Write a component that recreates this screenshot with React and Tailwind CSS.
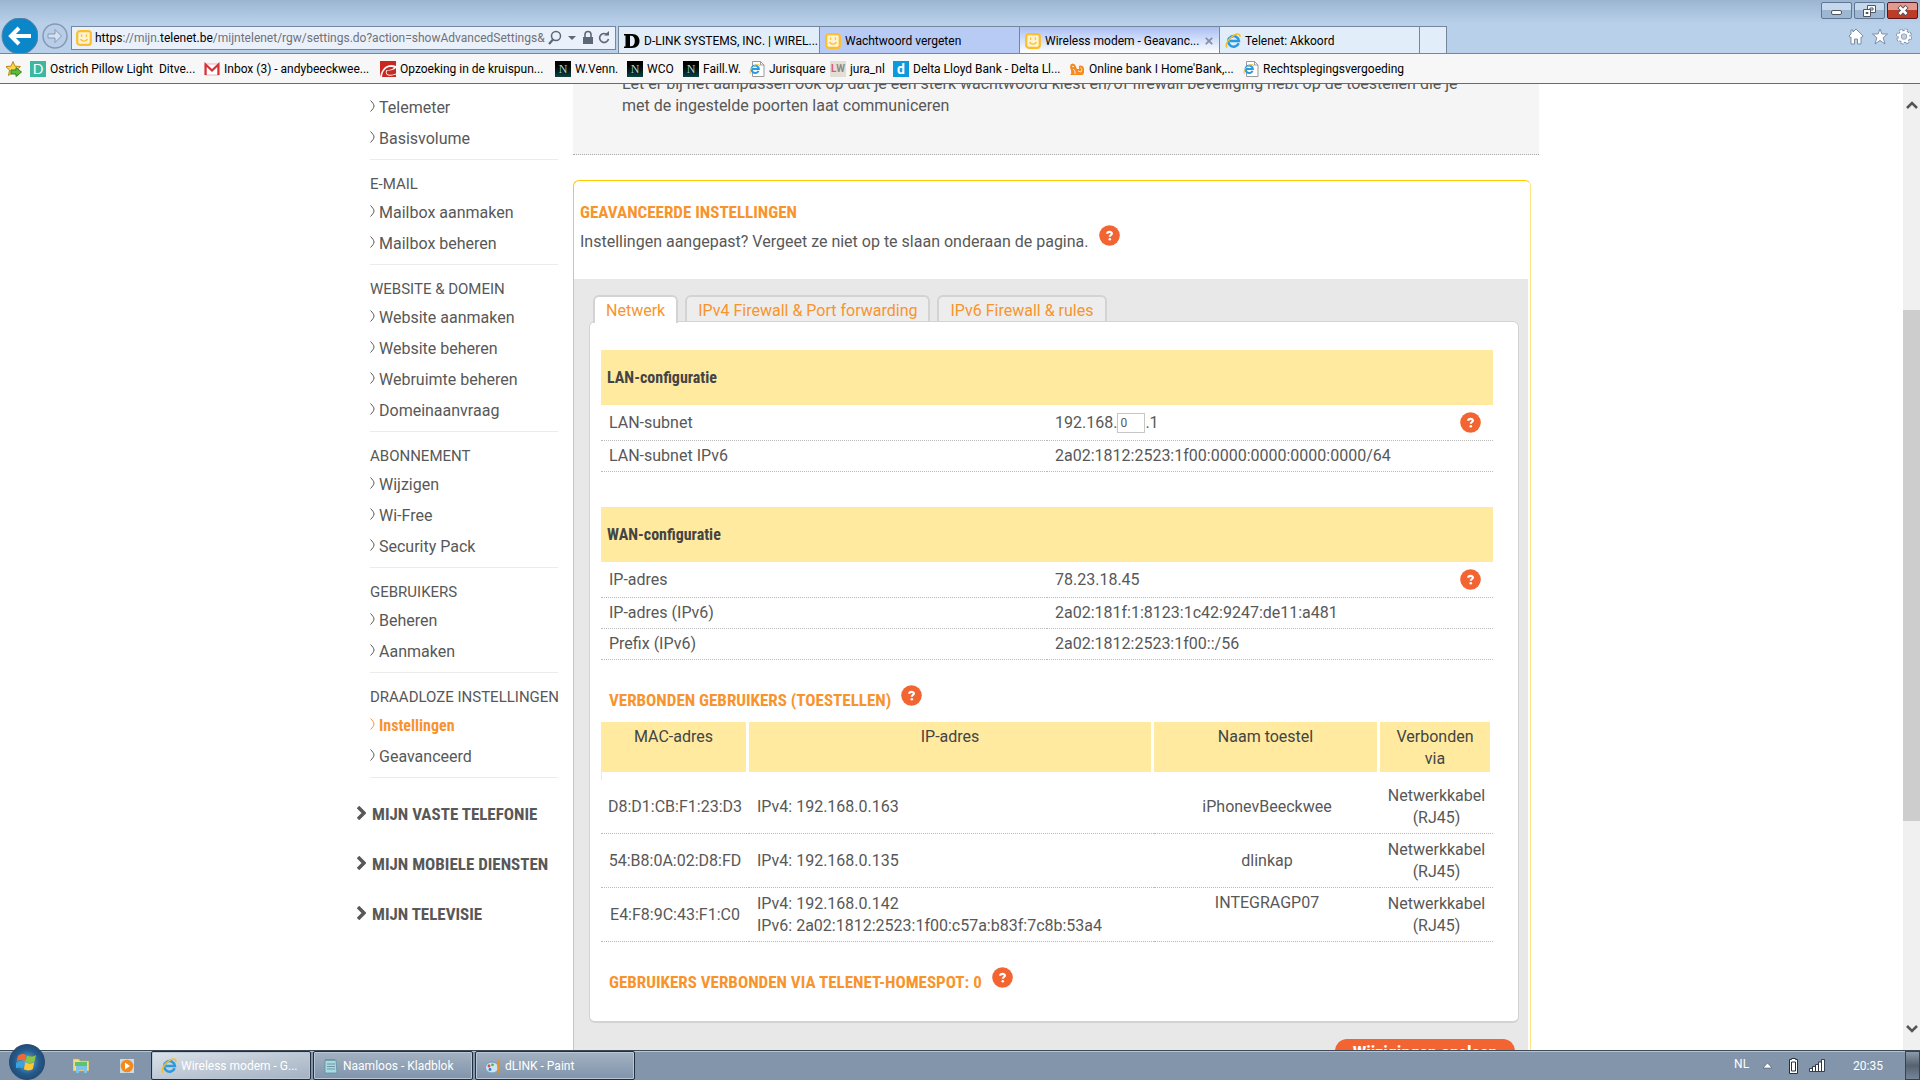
import React, { useState } from 'react'

const favorites = [
    { icon: 'ditve', name: 'Ostrich Pillow Light  Ditve...', width: 'w-[165px]' },
    { icon: 'gmail', name: 'Inbox (3) - andybeeckwee...', width: 'w-[167px]' },
    { icon: 'kruis', name: 'Opzoeking in de kruispun...', width: 'w-[166px]' },
    { icon: 'n', name: 'W.Venn.', width: 'w-[63px]' },
    { icon: 'n', name: 'WCO', width: 'w-[47px]' },
    { icon: 'n', name: 'Faill.W.', width: 'w-[57px]' },
    { icon: 'iepage', name: 'Jurisquare', width: 'w-[72px]' },
    { icon: 'lw', name: 'jura_nl', width: 'w-[54px]' },
    { icon: 'delta', name: 'Delta Lloyd Bank - Delta Ll...', width: 'w-[167px]' },
    { icon: 'lion', name: "Online bank I Home'Bank,...", width: 'w-[165px]' },
    { icon: 'iepage', name: 'Rechtsplegingsvergoeding', width: 'w-[170px]' },
]

const tabs = [
    { icon: 'dlink', name: 'D-LINK SYSTEMS, INC. | WIREL...', color: 'bg-[#e1eefa]', width: 'w-[201px]' },
    { icon: 'telenet', name: 'Wachtwoord vergeten', color: 'bg-[#b8cbf5]', width: 'w-[200px]' },
    { icon: 'telenet', name: 'Wireless modem - Geavanc...', color: 'bg-linear-to-b from-[#a9bff3] to-white', width: 'w-[200px]', active: true },
    { icon: 'ie', name: 'Telenet: Akkoord', color: 'bg-[#e1eefa]', width: 'w-[200px]' },
]

const menu = [
    { title: '', items: ['Telemeter', 'Basisvolume'] },
    { title: 'E-MAIL', items: ['Mailbox aanmaken', 'Mailbox beheren'] },
    { title: 'WEBSITE & DOMEIN', items: ['Website aanmaken', 'Website beheren', 'Webruimte beheren', 'Domeinaanvraag'] },
    { title: 'ABONNEMENT', items: ['Wijzigen', 'Wi-Free', 'Security Pack'] },
    { title: 'GEBRUIKERS', items: ['Beheren', 'Aanmaken'] },
    { title: 'DRAADLOZE INSTELLINGEN', items: ['Instellingen', 'Geavanceerd'] },
]

const mainMenu = ['MIJN VASTE TELEFONIE', 'MIJN MOBIELE DIENSTEN', 'MIJN TELEVISIE']

const settingTabs = ['Netwerk', 'IPv4 Firewall & Port forwarding', 'IPv6 Firewall & rules']

const devices = [
    { mac: 'D8:D1:CB:F1:23:D3', ips: ['IPv4: 192.168.0.163'], name: 'iPhonevBeeckwee' },
    { mac: '54:B8:0A:02:D8:FD', ips: ['IPv4: 192.168.0.135'], name: 'dlinkap' },
    { mac: 'E4:F8:9C:43:F1:C0', ips: ['IPv4: 192.168.0.142', 'IPv6: 2a02:1812:2523:1f00:c57a:b83f:7c8b:53a4'], name: 'INTEGRAGP07' },
]

const narrow = "font-['Liberation_Sans_Narrow','Roboto_Condensed',Roboto,sans-serif] font-bold"

function IeLogo({ className = 'size-4' }) {
    return (
        <svg viewBox="0 0 16 16" className={className}>
            <path d="M13.6 10.2A5.3 5.3 0 1 1 13.9 8H5" fill="none" stroke="#2a9be0" strokeWidth="2.6" />
            <path d="M2.2 14.6C-.6 12.4 3.6 5.2 8.8 2.3 12.6.2 15.6.8 14.8 4" fill="none" stroke="#f5bd27" strokeWidth="1.5" />
        </svg>
    )
}

function SiteIcon({ name }) {
    switch (name) {
        case 'telenet':
            return (
                <svg viewBox="0 0 16 16" className="size-4 shrink-0">
                    <rect x="1.2" y="1.2" width="13.6" height="13.6" rx="2.5" fill="#fdf3d4" stroke="#fcbf2b" strokeWidth="2.2" />
                    <path d="M5.6 4.6v2.2M10.4 4.6v2.2M4.6 9.2c1.4 2.6 5.4 2.6 6.8 0" fill="none" stroke="#fcbf2b" strokeWidth="1.4" />
                </svg>
            )
        case 'dlink':
            return (
                <svg viewBox="0 0 16 16" className="size-4 shrink-0">
                    <path fillRule="evenodd" d="M0 1h8c5 0 7.500 3 7.500 7s-2.500 7-7.500 7H0v-1.500h1.500v-11H0zM6 2.800v10.400c3.300.4 4.800-1.700 4.800-5.200S9.300 2.400 6 2.800z" />
                </svg>
            )
        case 'ie':
            return <IeLogo className="size-4 shrink-0" />
        case 'iepage':
            return (
                <svg viewBox="0 0 16 16" className="size-4 shrink-0">
                    <path d="M3.500.5h8l3.500 3.500v11.500H3.500z" fill="#fff" stroke="#9a9a9a" />
                    <path d="M11.500.5V4H15" fill="none" stroke="#9a9a9a" />
                    <path d="M9.600 9.800A3.700 3.700 0 1 1 9.900 8H3.500" fill="none" stroke="#2a9be0" strokeWidth="2" />
                    <path d="M1.500 12.800C-.3 10.500 3 6 6.500 4.200 9 3 10.800 3.300 10.400 5.200" fill="none" stroke="#f5bd27" />
                </svg>
            )
        case 'ditve':
            return <span className="flex size-4 shrink-0 items-center justify-center bg-[#3cb8a0] font-['Lato',sans-serif] text-sm text-white">D</span>
        case 'gmail':
            return (
                <svg viewBox="0 0 16 16" className="size-4 shrink-0">
                    <path d="M1 3h14v11H1z" fill="#fff" stroke="#e3a5a5" strokeWidth=".8" />
                    <path d="M1.600 14V3.500L8 9.500l6.400-6V14" fill="none" stroke="#d6323a" strokeWidth="2.200" />
                </svg>
            )
        case 'kruis':
            return (
                <svg viewBox="0 0 16 16" className="size-4 shrink-0">
                    <path d="M0 0h16v16H0z" fill="#c8281f" />
                    <path d="M0 16c1-5 3-9 7-11 3-1.500 6-1 9 0v2c-2 2-5 2.500-8.500 2.500C6 11 6.500 13 8.500 13.500c2.500.6 5 0 7.500-1v3.500z" fill="#f7f7f7" />
                    <path d="M2 16c.5-5 3-8.500 6-9.500 2.500-.8 5-.6 6 .2-1.500 1.800-4.500 2.300-7.500 2.300-1.500 2.500-.5 5 2 5.500 2.500.5 4.500 0 7.500-1V16z" fill="#c8281f" />
                </svg>
            )
        case 'n':
            return <span className="flex size-4 shrink-0 items-center justify-center bg-linear-to-b from-black to-[#0a4444] font-['Liberation_Serif',serif] text-xs text-[#a9d3d8]">N</span>
        case 'lw':
            return <span className="flex size-4 shrink-0 items-center justify-center bg-[#e2dfd6] font-['Roboto',sans-serif] text-[10px] font-bold"><span className="text-[#dd5a70]">L</span><span className="text-[#8d8a84]">W</span></span>
        case 'delta':
            return <span className="flex size-4 shrink-0 items-center justify-center bg-[#0a9bdc] font-['Roboto',sans-serif] text-sm font-bold text-white">d</span>
        default:
            return (
                <svg viewBox="0 0 16 16" className="size-4 shrink-0">
                    <path d="M1 14c2-1 1-3 1-5L1 7l.5-3.500 2-1 2.500 1L8 8h2V5c2-1 4.500 0 5 2.500V12l-1.500 2z" fill="#f58a1e" />
                    <path d="M4 8l2 2v3M9 10l3 1M11.500 6.500c1.500 1 1.500 3 .5 4.500M3 5.500h2" stroke="#fff" strokeWidth=".8" fill="none" />
                </svg>
            )
    }
}

function HelpButton() {
    return (
        <button type="button" aria-label="Help" className="block size-[21px] shrink-0 cursor-pointer">
            <svg viewBox="0 0 21 21" className="size-full">
                <circle cx="10.500" cy="10.500" r="10.300" fill="#f26532" />
                <path d="M8.200 8.700c.1-2.500 4.900-2.400 4.700-.1-.1 1.400-2.100 1.500-2.100 3.200" fill="none" stroke="#fff" strokeWidth="2.200" />
                <circle cx="10.800" cy="14.200" r="1.300" fill="#fff" />
            </svg>
        </button>
    )
}

function BrowserBar() {
    return (
        <header className="relative h-[84px] shrink-0 border-b border-[#6b6b6b] bg-[#f7f7f7] font-['Roboto',sans-serif] text-xs text-black">
            <div className="flex h-[54px] items-end border-b border-[#76879c] bg-linear-to-b from-[#9bb5d0] to-[#b9d0ea] to-45%">
                <div className="flex w-[71px] shrink-0 items-center gap-1 self-end">
                    <button aria-label="Back">
                        <svg viewBox="0 0 38 35" className="h-[35px] w-[38px]">
                            <circle cx="20" cy="18" r="18" fill="#0b86c8" stroke="#5f7f9f" />
                            <path d="M31 18H12M19 10l-8 8 8 8" fill="none" stroke="#fff" strokeWidth="4" />
                        </svg>
                    </button>
                    <button aria-label="Forward">
                        <svg viewBox="0 0 26 26" className="size-[26px]">
                            <circle cx="13" cy="13" r="12" fill="#b7cde8" stroke="#8798b2" strokeWidth="1.500" />
                            <path d="M6 11h7V6.500l6.500 6.500-6.500 6.500V15H6z" fill="#d3e1f3" stroke="#8798b2" />
                        </svg>
                    </button>
                </div>
                <div className="mb-[3px] flex h-6 w-[545px] shrink-0 items-center border border-[#7587a0] bg-[#eaf1fb] px-1">
                    <SiteIcon name="telenet" />
                    <div className="ml-[3px] flex-1 whitespace-nowrap text-[#6f7277]">
                        <span className="text-black">https</span>://mijn.<span className="text-black">telenet.be</span>/mijntelenet/rgw/settings.do?action=showAdvancedSettings&
                    </div>
                    <svg viewBox="0 0 64 16" className="h-4 w-16 shrink-0 text-[#5d6876]">
                        <circle cx="9" cy="6" r="4.500" fill="none" stroke="currentColor" strokeWidth="1.500" />
                        <path d="M6 9.500L2 14" stroke="currentColor" strokeWidth="2.200" />
                        <path d="M21 6h8l-4 4z" fill="currentColor" />
                        <path d="M36 7h10v7H36z" fill="currentColor" />
                        <path d="M38 7V4.500a3 3 0 0 1 6 0V7" fill="none" stroke="currentColor" strokeWidth="1.600" />
                        <path d="M60.500 5a4.500 4.500 0 1 0 1 4" fill="none" stroke="currentColor" strokeWidth="1.600" />
                        <path d="M57 5.500h5V1z" fill="currentColor" />
                    </svg>
                </div>
                <div className="ml-[2px] flex h-[27px] border-t border-[#76879c]">
                    {tabs.map((tab, index) => (
                        <button key={index} className={`flex items-center gap-1 overflow-hidden border-l border-[#76879c] pt-px pl-[5px] whitespace-nowrap ${tab.color} ${tab.width}`}>
                            <SiteIcon name={tab.icon} />
                            <span>{tab.name}</span>
                            {tab.active && (
                                <svg viewBox="0 0 8 8" className="mr-1.5 ml-auto size-2 shrink-0">
                                    <path d="M.8.8l6.400 6.400M7.200.8L.8 7.200" stroke="#8491a5" strokeWidth="1.800" />
                                </svg>
                            )}
                        </button>
                    ))}
                    <button aria-label="New tab" className="w-7 border-x border-[#76879c] bg-[#e1eefa]" />
                </div>
                <div className="mr-2 mb-2 ml-auto flex gap-2">
                    <button aria-label="Home">
                        <svg viewBox="0 0 16 17" className="h-[17px] w-4"><path d="M8 1l7 7-1 1.500-1-.5v7H9.500v-5h-3v5H3V9l-1 .5L1 8l2-2V2h2v2z" fill="#fff" stroke="#7c8da6" /></svg>
                    </button>
                    <button aria-label="Favorites">
                        <svg viewBox="0 0 16 17" className="h-[17px] w-4"><path d="M8 1l2 5h5.500l-4.300 3.700L13 16l-5-3.600L3 16l1.800-6.300L.5 6H6z" fill="#fff" stroke="#7c8da6" /></svg>
                    </button>
                    <button aria-label="Tools">
                        <svg viewBox="0 0 16 17" className="h-[17px] w-4">
                            <circle cx="8" cy="8.500" r="6" fill="none" stroke="#7c8da6" strokeWidth="4" strokeDasharray="2.700 2" />
                            <circle cx="8" cy="8.500" r="4.500" fill="none" stroke="#7c8da6" strokeWidth="4" />
                            <circle cx="8" cy="8.500" r="5.800" fill="none" stroke="#fff" strokeWidth="2.800" strokeDasharray="2.200 2.350" />
                            <circle cx="8" cy="8.500" r="4.300" fill="none" stroke="#fff" strokeWidth="2.400" />
                        </svg>
                    </button>
                </div>
            </div>
            <nav className="flex h-[29px] items-center gap-[9px] pl-[6px]">
                <button aria-label="Add to favorites" className="-mr-px">
                    <svg viewBox="0 0 16 16" className="size-4">
                        <path d="M7 .5l2 4.700 5.500.3-4 3.500 1.500 5.500-5-3-4.500 3L3.500 9-.3 5.500l5.300-.3z" fill="#fbd64b" stroke="#b98a1c" />
                        <path d="M5 9h5V6.500l5.500 4.500-5.500 4.500V13H5z" fill="#5dbb3c" stroke="#2f8420" />
                    </svg>
                </button>
                {favorites.map((item, index) => (
                    <a href="#" key={index} className={`flex shrink-0 items-center gap-1 whitespace-pre ${item.width}`}>
                        <SiteIcon name={item.icon} />
                        {item.name}
                    </a>
                ))}
            </nav>
            <div className="absolute top-[2px] right-[2px] flex gap-[2px]">
                <button aria-label="Minimize" className="flex h-[17px] w-[31px] items-center justify-center rounded-xs border border-[#5f7694] bg-linear-to-b from-[#c5d8ec] from-50% to-[#9db7d3] to-50%">
                    <span className="mt-1 h-[5px] w-[11px] rounded-xs border border-[#4f5661] bg-white" />
                </button>
                <button aria-label="Restore" className="flex h-[17px] w-[31px] items-center justify-center rounded-xs border border-[#5f7694] bg-linear-to-b from-[#c5d8ec] from-50% to-[#9db7d3] to-50%">
                    <svg viewBox="0 0 13 12" className="h-3 w-[13px]" fill="#fff" stroke="#4f5661"><path d="M4.500.5h8v7h-8z" /><path d="M7 3h3v2H7z" /><path d="M.5 4.500h7v7h-7z" /><path d="M3 7.500h2v1H3z" /></svg>
                </button>
                <button aria-label="Close" className="flex h-[17px] w-[31px] items-center justify-center rounded-xs border border-[#5b1620] bg-linear-to-b from-[#e09a8e] from-45% to-[#bd3c26] to-50%">
                    <svg viewBox="0 0 12 11" className="h-[11px] w-3"><path d="M2 1.500l8 8M10 1.500l-8 8" stroke="#4f5661" strokeWidth="4.500" /><path d="M2.500 2l7 7M9.500 2l-7 7" stroke="#fff" strokeWidth="2.500" /></svg>
                </button>
            </div>
        </header>
    )
}

function Sidebar() {
    return (
        <aside className="w-[201px] shrink-0 pt-[9px]">
            {menu.map((group, index) => (
                <div key={index} className="ml-[13px] border-b border-[#ececec] pb-1">
                    {group.title && <div className="h-[38px] pt-[10px] text-[15px] leading-7 whitespace-nowrap">{group.title}</div>}
                    {group.items.map((item) => (
                        <a href="#" key={item} className={`flex h-[31px] items-center gap-1 pb-[2px] ${item === 'Instellingen' ? 'text-[#f7942e]' : ''}`}>
                            <svg viewBox="0 0 5 12" className="mb-1 h-3 w-[5px]"><path d="M.5.5c2 2 3.500 4 3.500 5.500S2.500 9.500.5 11.500" fill="none" stroke="currentColor" /></svg>
                            <span className={item === 'Instellingen' ? narrow : ''}>{item}</span>
                        </a>
                    ))}
                </div>
            ))}
            <div className="pt-3">
                {mainMenu.map((item) => (
                    <a href="#" key={item} className={`flex h-[50px] items-center gap-[6px] text-[17px] whitespace-nowrap ${narrow}`}>
                        <svg viewBox="0 0 9 14" className="mb-1 h-[14px] w-[9px] shrink-0"><path d="M1 1l6 6-6 6" fill="none" stroke="currentColor" strokeWidth="3.500" /></svg>
                        {item}
                    </a>
                ))}
            </div>
        </aside>
    )
}

function ConfigTable({ title, children }) {
    return (
        <section>
            <h3 className={`flex h-[55px] items-center bg-[#ffeaa0] pl-[6px] text-base text-[#444] ${narrow}`}>{title}</h3>
            <table className="w-full table-fixed border-separate border-spacing-0">
                <colgroup>
                    <col className="w-1/2" />
                    <col className="w-[45%]" />
                    <col className="w-[5%]" />
                </colgroup>
                <tbody>{children}</tbody>
            </table>
        </section>
    )
}

function ConfigRow({ label, htmlFor, help = false, children }) {
    return (
        <tr className={help ? 'h-9' : 'h-[31px]'}>
            <th className="border-b border-dotted border-[#bbb] pl-2 text-left font-normal">
                {htmlFor ? <label htmlFor={htmlFor}>{label}</label> : label}
            </th>
            <td className="border-b border-dotted border-[#bbb] pl-2">{children}</td>
            <td className="border-b border-dotted border-[#bbb] pl-3">{help && <HelpButton />}</td>
        </tr>
    )
}

function DeviceTable() {
    return (
        <table className="w-full table-fixed border-separate border-spacing-0 text-center leading-[22px]">
            <colgroup>
                <col className="w-[148px]" />
                <col />
                <col className="w-[226px]" />
                <col className="w-[113px]" />
            </colgroup>
            <thead>
                <tr className="h-[50px] align-top">
                    {['MAC-adres', 'IP-adres', 'Naam toestel', 'Verbonden via'].map((head) => (
                        <th key={head} className="border-r-3 border-white bg-[#ffeaa0] px-4 pt-1 pb-[2px] leading-[22px] font-normal text-[#444]">{head}</th>
                    ))}
                </tr>
            </thead>
            <tbody>
                <tr aria-hidden="true"><td colSpan={4} className="h-2 border-l border-[#ffeaa0] p-0" /></tr>
                {devices.map((device) => (
                    <tr key={device.mac} className="h-[54px]">
                        <td className="border-b border-dotted border-[#bbb] whitespace-nowrap">{device.mac}</td>
                        <td className="border-b border-dotted border-[#bbb] py-1 pl-2 text-left">
                            {device.ips.map((ip) => <div key={ip}>{ip}</div>)}
                        </td>
                        <td className={`border-b border-dotted border-[#bbb] py-1 ${device.ips.length > 1 ? 'align-top' : ''}`}>{device.name}</td>
                        <td className="border-b border-dotted border-[#bbb] py-1">Netwerkkabel (RJ45)</td>
                    </tr>
                ))}
            </tbody>
        </table>
    )
}

function Settings() {
    const [tab, setTab] = useState('Netwerk')
    const [subnet, setSubnet] = useState('0')
    return (
        <section className="mt-[25px] mr-2 rounded-t-md border border-[#ffcc00] border-r-[#ffe680]">
            <div className="h-[98px] pt-4 pl-[6px]">
                <h2 className={`h-8 text-[17px] leading-[30px] text-[#f7942e] ${narrow}`}>GEAVANCEERDE INSTELLINGEN</h2>
                <div className="flex gap-[10px]">
                    <p className="leading-[26px]">Instellingen aangepast? Vergeet ze niet op te slaan onderaan de pagina.</p>
                    <div className="-mt-1"><HelpButton /></div>
                </div>
            </div>
            <div className="mr-[2px] bg-[#e8e8e8] pt-4 pr-[9px] pb-10 pl-[15px]">
                <div role="tablist" className="relative ml-1 flex gap-[7px]">
                    {settingTabs.map((name) => (
                        <button
                            role="tab"
                            key={name}
                            aria-selected={tab === name}
                            onClick={() => setTab(name)}
                            className={`rounded-t-md border-2 border-b-0 border-[#d3d3d3] px-[11px] leading-7 text-[#f7942e] ${tab === name ? '-mb-[2px] h-[28px] bg-white' : 'h-[26px] bg-[#ededed]'}`}
                        >
                            {name}
                        </button>
                    ))}
                </div>
                <div className="rounded-md border border-b-2 border-[#d3d3d3] bg-white pt-7 pr-[25px] pb-[22px] pl-[11px]">
                    <div className="flex flex-col gap-[35px]">
                        <ConfigTable title="LAN-configuratie">
                            <ConfigRow label="LAN-subnet" htmlFor="subnet" help>
                                192.168.<input id="subnet" value={subnet} onChange={(e) => setSubnet(e.target.value)} className="h-5 w-7 border border-[#c6c6c6] px-[2px] align-middle text-xs" />.1
                            </ConfigRow>
                            <ConfigRow label="LAN-subnet IPv6">2a02:1812:2523:1f00:0000:0000:0000:0000/64</ConfigRow>
                        </ConfigTable>
                        <ConfigTable title="WAN-configuratie">
                            <ConfigRow label="IP-adres" help>78.23.18.45</ConfigRow>
                            <ConfigRow label="IP-adres (IPv6)">2a02:181f:1:8123:1c42:9247:de11:a481</ConfigRow>
                            <ConfigRow label="Prefix (IPv6)">2a02:1812:2523:1f00::/56</ConfigRow>
                        </ConfigTable>
                    </div>
                    <div className="flex h-[62px] gap-[10px] pt-[25px] pl-2">
                        <h2 className={`text-[17px] leading-[30px] text-[#f7942e] ${narrow}`}>VERBONDEN GEBRUIKERS (TOESTELLEN)</h2>
                        <HelpButton />
                    </div>
                    <DeviceTable />
                    <div className="flex h-[57px] gap-[10px] pt-[25px] pl-2">
                        <h2 className={`text-[17px] leading-[30px] text-[#f7942e] ${narrow}`}>GEBRUIKERS VERBONDEN VIA TELENET-HOMESPOT: 0</h2>
                        <HelpButton />
                    </div>
                </div>
                <div className="mt-4 mr-1 flex justify-end">
                    <button className={`h-7 w-[180px] rounded-xl bg-[#f26532] text-lg leading-7 text-white ${narrow}`}>Wijzigingen opslaan</button>
                </div>
            </div>
        </section>
    )
}

function Scrollbar() {
    return (
        <div className="flex w-[17px] shrink-0 flex-col items-center bg-[#f0f0f0] py-4">
            <svg viewBox="0 0 12 10" className="h-[10px] w-3"><path d="M1 8l5-5 5 5" fill="none" stroke="#555" strokeWidth="2.500" /></svg>
            <div className="flex-[200]" />
            <div className="w-full flex-[510] bg-[#cdcdcd]" />
            <div className="flex-[203]" />
            <svg viewBox="0 0 12 10" className="h-[10px] w-3"><path d="M1 2l5 5 5-5" fill="none" stroke="#555" strokeWidth="2.500" /></svg>
        </div>
    )
}

const taskClass = 'flex h-[29px] w-40 items-center gap-1 rounded-xs border border-[#232e3d] pl-[9px] text-white shadow-[inset_0_0_0_1px_#b9c6d6]'

function Taskbar() {
    return (
        <footer className="relative flex h-[30px] shrink-0 items-start border-t border-[#3f4a59] bg-[#8295ab] font-['Roboto',sans-serif] text-xs text-white shadow-[inset_0_1px_0_#b5c3d4]">
            <button aria-label="Start" className="absolute bottom-0 left-[9px] flex size-9 items-center justify-center rounded-full border border-[#2b4a6c] bg-radial from-[#6fb6de] via-[#245c8e] to-[#1b3a5e]">
                <svg viewBox="0 0 22 20" className="h-5 w-[22px]">
                    <path d="M2 4c3-2.500 5.500-2.500 8-1L8.500 9c-2.500-1.400-5-1.400-8 .5z" fill="#ee6a35" />
                    <path d="M11 3.500c3 1.500 6 1.500 9-.5l-1.500 6.500c-3 2-6 1.800-9 .3z" fill="#8cc63f" />
                    <path d="M.3 10.500c3-2 5.500-1.900 8-.5L6.800 16.500c-2.500-1.500-5.300-1.300-8 .5z" fill="#37a3e0" />
                    <path d="M9.300 10.600c3 1.500 6 1.600 9-.3L16.800 17c-3 2-6 1.700-9 .3z" fill="#fcc732" />
                </svg>
            </button>
            <div className="flex h-full w-[151px] shrink-0 items-center gap-[30px] pl-[73px]">
                <svg viewBox="0 0 16 16" className="size-4"><path d="M0 1h6l1 2h9v10H0z" fill="#f3dc8c" stroke="#c9a94c" strokeWidth=".6" /><path d="M2 4h12v4H2z" fill="#5ec26a" /><path d="M3 8h11v7h-3v-3H6v3H3z" fill="#7cc4ec" /></svg>
                <svg viewBox="0 0 16 16" className="size-4"><path d="M1 1h14v14H1z" fill="#c8dcec" /><circle cx="8" cy="8" r="6.300" fill="#f58a1c" /><path d="M6 4.500l5 3.500-5 3.500z" fill="#fff" /></svg>
            </div>
            <div className="flex gap-[2px]">
                <button className={`${taskClass} bg-linear-to-br from-[#dbe1e9] to-[#a3b1c1]`}><IeLogo />Wireless modem - G...</button>
                <button className={`${taskClass} bg-linear-to-b from-[#a4b1c1] to-[#8094ab]`}>
                    <svg viewBox="0 0 16 16" className="size-4"><path d="M2 2h11l1 13H2z" fill="#a5dbe6" stroke="#5e8f9c" strokeWidth=".8" /><path d="M3 1v2M5 1v2M7 1v2M9 1v2M11 1v2M4 6h8M4 8.500h8M4 11h8" stroke="#5f747a" strokeWidth=".7" /></svg>
                    Naamloos - Kladblok
                </button>
                <button className={`${taskClass} bg-linear-to-b from-[#a4b1c1] to-[#8094ab]`}>
                    <svg viewBox="0 0 16 16" className="size-4"><ellipse cx="7" cy="9.500" rx="6.500" ry="5.500" fill="#cde4f2" stroke="#6e9dbd" /><circle cx="4" cy="8" r="1.400" fill="#dd4b39" /><circle cx="7.500" cy="6.800" r="1.400" fill="#62ae3a" /><circle cx="5" cy="11.500" r="1.400" fill="#3a78cf" /><path d="M13.500 1l1.500 2-1 12h-1.500l-.5-12z" fill="#e58f2f" /></svg>
                    dLINK - Paint
                </button>
            </div>
            <div className="ml-auto flex h-full items-center">
                <span className="mb-1">NL</span>
                <svg viewBox="0 0 9 6" className="ml-[14px] h-[6px] w-[9px]"><path d="M0 5l4.500-5L9 5z" fill="#fff" stroke="#48556a" strokeWidth=".6" /></svg>
                <svg viewBox="0 0 11 16" className="ml-4 h-4 w-[11px]"><path d="M3.500 1.500v-1h4v1h2v14h-8v-14z" fill="#fff" stroke="#26303c" /><path d="M3.500 4h4v9h-4z" fill="#fff" stroke="#26303c" /></svg>
                <svg viewBox="0 0 16 13" className="ml-[10px] h-[13px] w-4"><path d="M.5 9.500h3v3h-3zM3.500 7.500h3v5h-3zM6.500 5.500h3v7h-3zM9.500 3h3v9.500h-3zM12.500.5h3v12h-3z" fill="#fff" stroke="#26303c" strokeWidth=".9" /></svg>
                <time className="ml-7">20:35</time>
                <button aria-label="Show desktop" className="ml-[22px] h-full w-[15px] border border-[#39424f] bg-linear-to-b from-[#8c9aab] via-[#56626f] to-[#75859a]" />
            </div>
        </footer>
    )
}

export default function App() {
    return (
        <div className="flex h-screen flex-col overflow-hidden bg-white">
            <BrowserBar />
            <div className="flex min-h-0 flex-1">
                <div className="min-w-0 flex-1 overflow-hidden font-['Roboto',sans-serif] text-base text-[#585858]">
                    <div className="mx-auto flex w-full max-w-[1189px]">
                        <Sidebar />
                        <main className="ml-[15px] min-w-0 flex-1 pr-[7px]">
                            <div className="border-b border-dotted border-[#aaa] bg-[#f5f5f5] pr-[50px] pb-[37px] pl-[49px]">
                                <p className="-mt-[11px] leading-[22px]">
                                    Let er bij het aanpassen ook op dat je een sterk wachtwoord kiest en/of firewall beveiliging hebt op de toestellen die je met de ingestelde poorten laat communiceren
                                </p>
                            </div>
                            <Settings />
                        </main>
                    </div>
                </div>
                <Scrollbar />
            </div>
            <Taskbar />
        </div>
    )
}
